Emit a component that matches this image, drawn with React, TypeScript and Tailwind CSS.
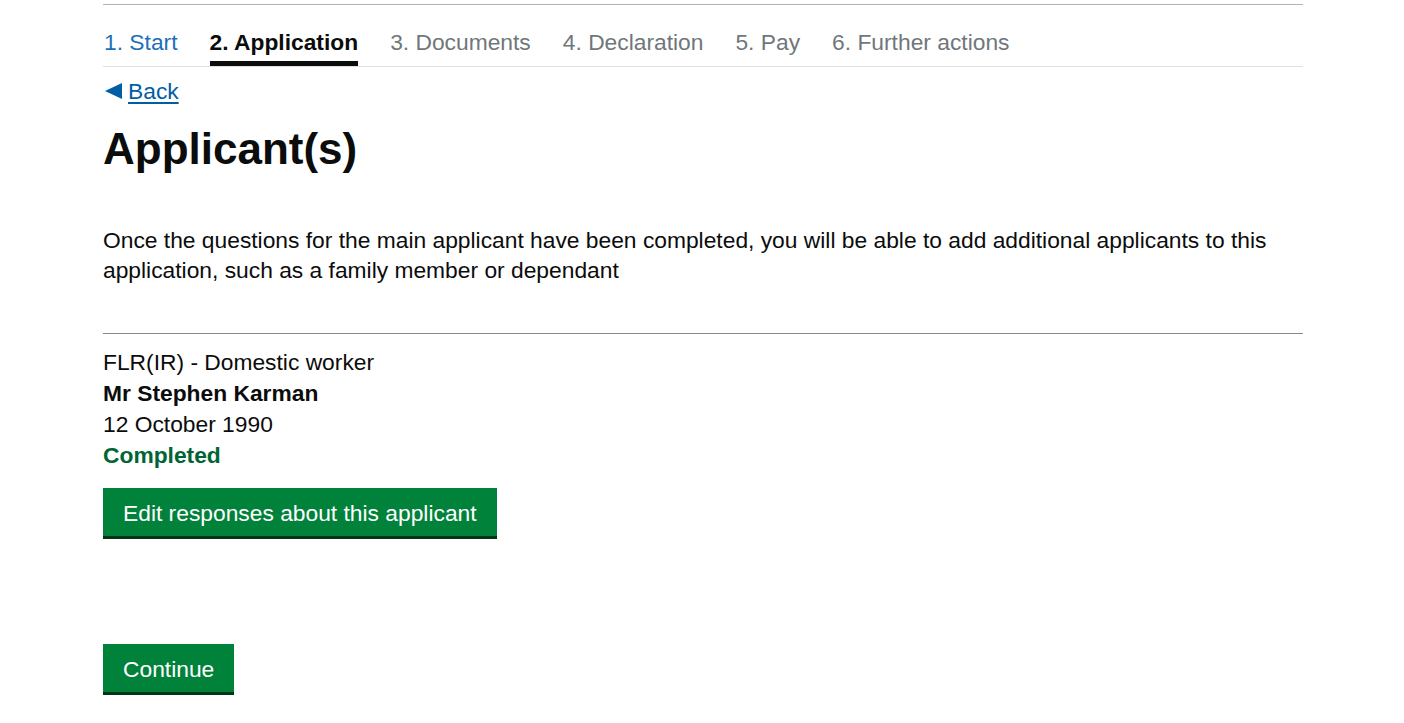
export default function App() {
  const font = { fontFamily: '"Liberation Sans", Arial, sans-serif' };
  return (
    <div className="min-h-screen bg-white text-[#0b0c0c]" style={font}>
      <div className="ml-[103px] w-[1200px] pt-[4px]">
        <nav className="flex gap-[32px] border-t border-b border-t-[#b1b4b6] border-b-[#e0e0e0] h-[63px] items-stretch text-[22.8px] pl-[1px]">
          <a className="flex items-center pt-[14px] text-[#1d70b8]">1. Start</a>
          <a className="flex items-center font-bold border-b-[5px] border-[#0b0c0c] pt-[19px] text-[#0b0c0c]">2. Application</a>
          <span className="flex items-center pt-[14px] text-[#6f777b]">3. Documents</span>
          <span className="flex items-center pt-[14px] text-[#6f777b]">4. Declaration</span>
          <span className="flex items-center pt-[14px] text-[#6f777b]">5. Pay</span>
          <span className="flex items-center pt-[14px] text-[#6f777b]">6. Further actions</span>
        </nav>
        <a className="mt-[9px] inline-flex items-center text-[22.8px] leading-[30px] text-[#005ea5]">
          <svg width="17" height="16" viewBox="0 0 17 16" className="ml-[2px] mr-[6px]">
            <polygon points="0,8 17,0 17,16" fill="#005ea5" />
          </svg>
          <span className="underline underline-offset-[3px]">Back</span>
        </a>
        <h1 className="mt-[16px] text-[44px] leading-[54px] font-bold">Applicant(s)</h1>
        <p className="mt-[49px] text-[22.8px] leading-[30px]">
          Once the questions for the main applicant have been completed, you will be able to add additional applicants to this application, such as a family member or dependant
        </p>
        <hr className="mt-[48px] border-0 border-t border-[#8a8a8a]" />
        <div className="mt-[13px] text-[22.8px] leading-[31px]">
          <div>FLR(IR) - Domestic worker</div>
          <div className="font-bold">Mr Stephen Karman</div>
          <div>12 October 1990</div>
          <div className="font-bold text-[#006435]">Completed</div>
        </div>
        <button className="mt-[17px] block bg-[#00823b] text-white text-[22.8px] leading-[30px] px-[20px] pt-[10px] pb-[8px] shadow-[0_3px_0_#003618]">
          Edit responses about this applicant
        </button>
        <button className="mt-[108px] block bg-[#00823b] text-white text-[22.8px] leading-[30px] px-[20px] pt-[10px] pb-[8px] shadow-[0_3px_0_#003618]">
          Continue
        </button>
      </div>
    </div>
  );
}
